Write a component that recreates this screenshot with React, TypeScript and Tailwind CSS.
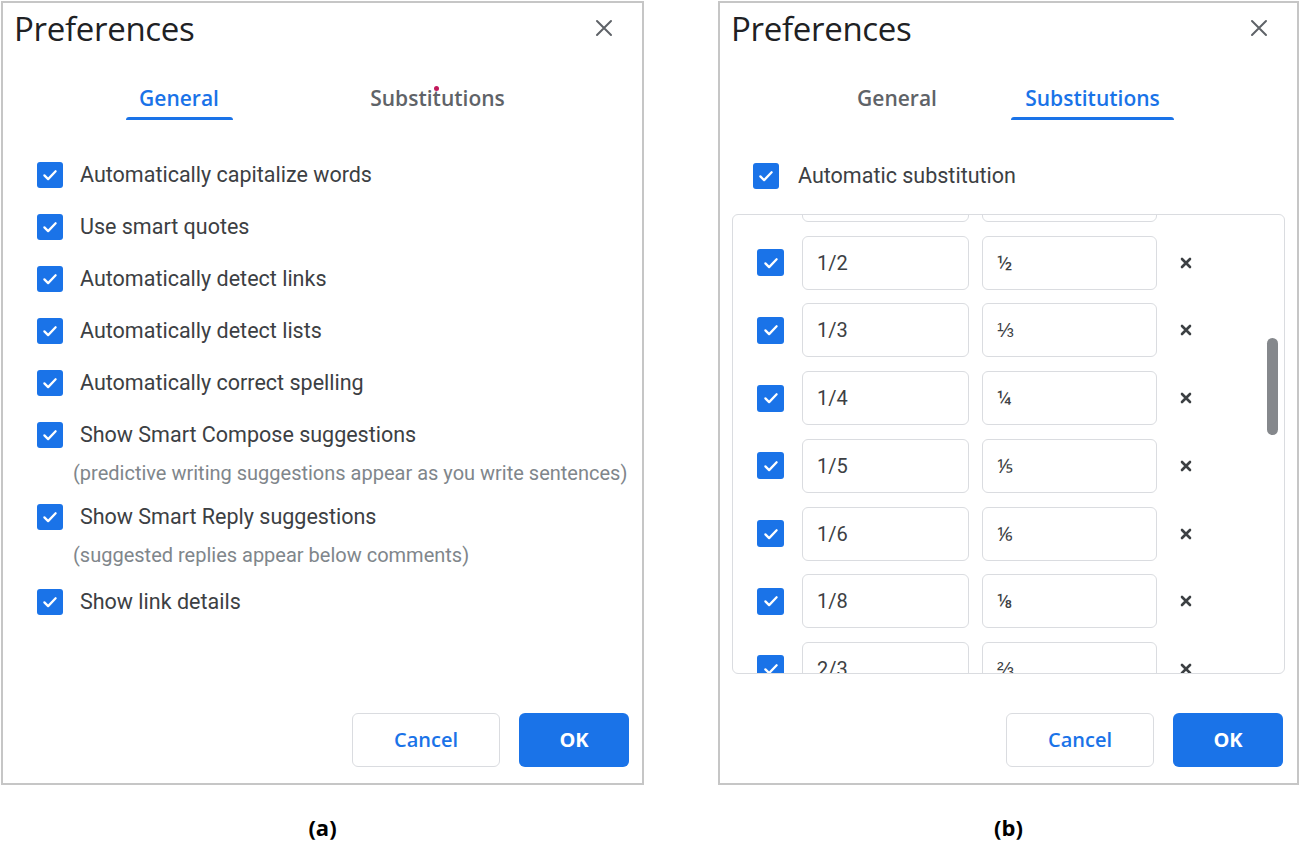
import React from 'react';

function Check({ size = 26 }: { size?: number }) {
  return (
    <div
      className="flex shrink-0 items-center justify-center rounded-[3px] bg-[#1a73e8]"
      style={{ width: size, height: size }}
    >
      <svg width="18" height="18" viewBox="0 0 24 24" fill="none">
        <path d="M4.5 12.5l5 5L19.5 7" stroke="#fff" strokeWidth="3" strokeLinecap="round" strokeLinejoin="round" />
      </svg>
    </div>
  );
}

function CloseIcon() {
  return (
    <svg width="18" height="18" viewBox="0 0 18 18" fill="none">
      <path d="M2 2l14 14M16 2L2 16" stroke="#5f6368" strokeWidth="2" strokeLinecap="round" />
    </svg>
  );
}

function SmallX() {
  return (
    <svg width="12" height="12" viewBox="0 0 12 12" fill="none">
      <path d="M2 2l8 8M10 2l-8 8" stroke="#3c4043" strokeWidth="2.6" strokeLinecap="round" />
    </svg>
  );
}

function Header({ children }: { children: React.ReactNode }) {
  return (
    <>
      <div className="flex items-start justify-between">
        <div className="pl-[11px] pt-[4px] text-[33px] leading-[44px] text-[#202124] [font-family:'Open_Sans',sans-serif] tracking-[-0.3px]">
          Preferences
        </div>
        <div className="pr-[29px] pt-[16px]">
          <CloseIcon />
        </div>
      </div>
      {children}
    </>
  );
}

function Tab({ label, active, width, dot }: { label: string; active?: boolean; width: number; dot?: boolean }) {
  return (
    <div className="relative flex flex-col items-center" style={{ width }}>
      <div
        className={`h-[34px] text-[21px] font-[550] leading-[34px] [font-family:'Open_Sans',sans-serif] ${
          active ? 'text-[#1a73e8]' : 'text-[#5f6368]'
        }`}
      >
        {label}
      </div>
      <div className={`mt-[2px] h-[3px] w-full rounded-t-[3px] ${active ? 'bg-[#1a73e8]' : 'bg-transparent'}`} />
      {dot && <div className="absolute left-[78px] top-[5px] h-[5px] w-[5px] rounded-full bg-[#c2185b]" />}
    </div>
  );
}

function Buttons() {
  return (
    <div className="flex justify-end gap-[19px] [font-family:'Open_Sans',sans-serif]">
      <button className="h-[54px] w-[148px] rounded-[6px] border border-[#dadce0] bg-white text-[20px] font-semibold text-[#1a73e8]">
        Cancel
      </button>
      <button className="h-[54px] w-[110px] rounded-[6px] bg-[#1a73e8] text-[20px] font-bold text-white">
        OK
      </button>
    </div>
  );
}

function Item({ label }: { label: string }) {
  return (
    <div className="flex h-[52px] items-center">
      <Check />
      <span className="ml-[17px] text-[21.5px] text-[#3c4043]">{label}</span>
    </div>
  );
}

function Sub({ text }: { text: string }) {
  return <div className="ml-[36px] h-[24px] text-[20px] leading-[24px] text-[#80868b]">{text}</div>;
}

function GeneralPanel() {
  return (
    <div className="flex h-[784px] w-[643px] flex-col border-2 border-[#c6c6c6] bg-white">
      <Header>
        <div className="mt-[30px] flex justify-center gap-[123px]">
          <Tab label="General" active width={107} />
          <Tab label="Substitutions" width={164} dot />
        </div>
      </Header>
      <div className="mt-[29px] flex flex-col pl-[34px] [font-family:Roboto,sans-serif]">
        <Item label="Automatically capitalize words" />
        <Item label="Use smart quotes" />
        <Item label="Automatically detect links" />
        <Item label="Automatically detect lists" />
        <Item label="Automatically correct spelling" />
        <Item label="Show Smart Compose suggestions" />
        <Sub text="(predictive writing suggestions appear as you write sentences)" />
        <div className="mt-[6px]">
          <Item label="Show Smart Reply suggestions" />
        </div>
        <Sub text="(suggested replies appear below comments)" />
        <div className="mt-[9px]">
          <Item label="Show link details" />
        </div>
      </div>
      <div className="mt-auto pb-[16px] pr-[13px]">
        <Buttons />
      </div>
    </div>
  );
}

const rows = [
  ['', ''],
  ['1/2', '½'],
  ['1/3', '⅓'],
  ['1/4', '¼'],
  ['1/5', '⅕'],
  ['1/6', '⅙'],
  ['1/8', '⅛'],
  ['2/3', '⅔'],
];

function SubRow({ from, to }: { from: string; to: string }) {
  return (
    <div className="flex h-[67.7px] shrink-0 items-center pl-[24px]">
      <Check size={27} />
      <div className="ml-[18px] flex h-[54px] w-[167px] items-center rounded-[6px] border border-[#dadce0] pl-[14px] text-[20px] text-[#3c4043]">
        {from}
      </div>
      <div className="ml-[13px] flex h-[54px] w-[175px] items-center rounded-[6px] border border-[#dadce0] pl-[14px] text-[20px] text-[#3c4043]">
        {to}
      </div>
      <div className="ml-[23px]">
        <SmallX />
      </div>
    </div>
  );
}

function SubstitutionsPanel() {
  return (
    <div className="flex h-[784px] w-[581px] flex-col border-2 border-[#c6c6c6] bg-white">
      <Header>
        <div className="mt-[30px] flex justify-center gap-[60px]">
          <Tab label="General" width={108} />
          <Tab label="Substitutions" active width={163} />
        </div>
      </Header>
      <div className="mt-[40px] flex items-center pl-[33px] [font-family:Roboto,sans-serif]">
        <Check />
        <span className="ml-[19px] text-[21.5px] text-[#3c4043]">Automatic substitution</span>
      </div>
      <div className="relative mx-[12px] mt-[22px] h-[460px] overflow-hidden rounded-[6px] border border-[#dadce0] [font-family:Roboto,sans-serif]">
        <div className="mt-[-54px] flex flex-col">
          {rows.map(([f, t], i) => (
            <SubRow key={i} from={f} to={t} />
          ))}
        </div>
        <div className="absolute right-[6px] top-[123px] h-[97px] w-[11px] rounded-full bg-[#85888c]" />
      </div>
      <div className="mt-auto pb-[16px] pr-[14px]">
        <Buttons />
      </div>
    </div>
  );
}

export default function App() {
  return (
    <div className="h-[846px] w-[1301px] overflow-hidden bg-white">
      <div className="flex gap-[74px] pl-[1px] pt-[1px]">
        <div className="flex flex-col items-center">
          <GeneralPanel />
          <div className="mt-[26px] text-[22px] font-bold text-black [font-family:'Open_Sans',sans-serif]">(a)</div>
        </div>
        <div className="flex flex-col items-center">
          <SubstitutionsPanel />
          <div className="mt-[26px] text-[22px] font-bold text-black [font-family:'Open_Sans',sans-serif]">(b)</div>
        </div>
      </div>
    </div>
  );
}
